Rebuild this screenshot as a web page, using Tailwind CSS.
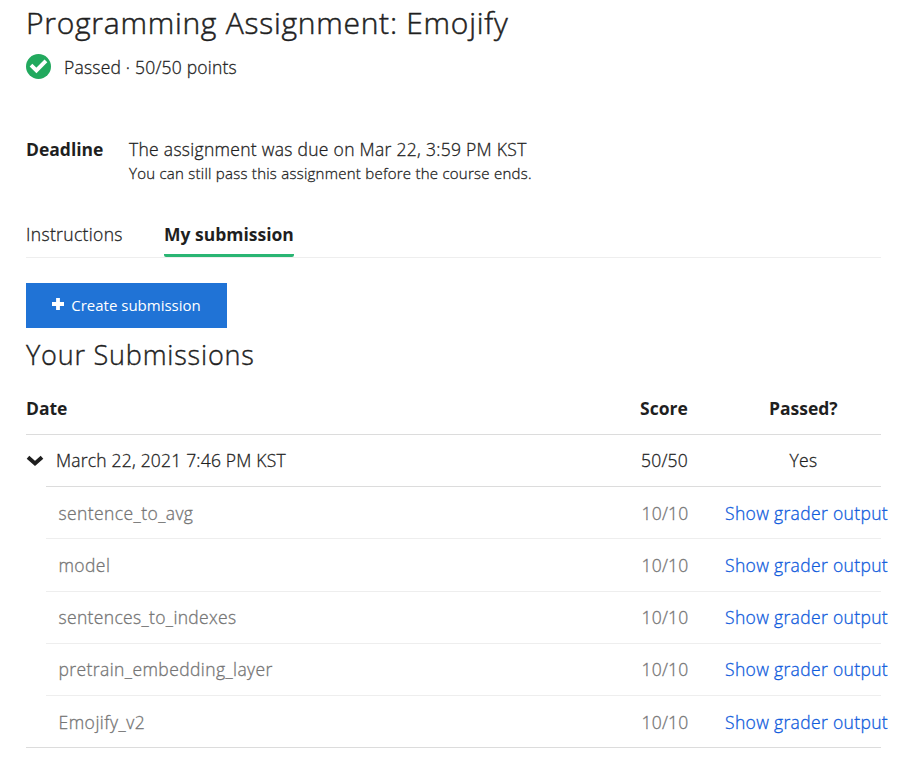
<!DOCTYPE html>
<html lang="en">
<head>
<meta charset="utf-8">
<title>Programming Assignment: Emojify</title>
<script src="https://cdn.jsdelivr.net/npm/@tailwindcss/browser@4"></script>
</head>
<body class="bg-white font-['Open_Sans',sans-serif] font-light [-webkit-text-stroke:0.3px] text-[#1f1f1f] text-[17.5px] leading-6 h-[763px] overflow-hidden">
<main class="pl-[26px] w-[881px]">
  <h1 class="pt-[3px] text-[30px] leading-10 font-light tracking-[0.74px] [-webkit-text-stroke:0.5px]">Programming Assignment: Emojify</h1>
  <div class="flex items-center mt-[11px] h-[25px]">
    <svg class="w-[25px] h-[25px]" viewBox="0 0 25 25"><circle cx="12.5" cy="12.5" r="12.5" fill="#22a95e"/><path d="M5 11.2l5.4 5.2 9.5-9.6" fill="none" stroke="#fff" stroke-width="3.9"/></svg>
    <span class="ml-[13px] pt-px tracking-[0.21px]">Passed · 50/50 points</span>
  </div>
  <section class="flex mt-[58px] h-[50px]">
    <div class="w-[103px] font-bold [-webkit-text-stroke:0px]">Deadline</div>
    <div><p class="tracking-[0.29px]">The assignment was due on Mar 22, 3:59 PM KST</p><p class="text-[15px] tracking-[0.25px]">You can still pass this assignment before the course ends.</p></div>
  </section>
  <nav class="flex mt-[35px] h-[36px] border-b border-[#eee]">
    <a class="w-[138px] tracking-[0.34px]">Instructions</a>
    <a class="font-bold [-webkit-text-stroke:0px] h-[35px] border-b-[3px] border-[#2ab573] rounded-b-xs">My submission</a>
  </nav>
  <button class="mt-[25px] flex items-center justify-center w-[201px] h-[45px] pb-px bg-[#2073d6] text-white text-[15px] font-normal [-webkit-text-stroke:0px]">
    <svg class="w-3 h-3 mr-[7px] -mt-[3px]" viewBox="0 0 12 12"><path d="M6 0v12M0 6h12" stroke="#fff" stroke-width="3.8"/></svg>Create submission
  </button>
  <h2 class="mt-[7px] text-[27px] leading-10 font-light tracking-[0.8px] [-webkit-text-stroke:0.4px]">Your Submissions</h2>
  <div class="mt-2">
    <div class="grid grid-cols-[614px_129px_112px] h-[52px] pb-[2px] items-center border-b border-[#dcdcdc] font-bold [-webkit-text-stroke:0px]"><span>Date</span><span>Score</span><span>Passed?</span></div>
    <div class="grid grid-cols-[30px_632px_193px] h-[51px] pb-px items-center">
      <svg class="w-[18px] h-[12px] mt-px" viewBox="0 0 18 12"><path d="M2 2.3L9 8.5l7-6.2" fill="none" stroke="#1f1f1f" stroke-width="3.9"/></svg>
      <div class="flex justify-between tracking-[0.2px]"><span>March 22, 2021 7:46 PM KST</span><span>50/50</span></div>
      <span class="pl-[101.5px] tracking-[0.3px]">Yes</span>
    </div>
    <ul class="pl-[20px] border-b border-[#dcdcdc] text-[#757575] tracking-[0.41px]">
      <li class="flex items-center h-[52px] border-t border-[#dcdcdc] pl-[12.5px] pt-px"><span class="w-[582px] shrink-0">sentence_to_avg</span><span class="w-[48px] shrink-0 flex justify-end tracking-[0.2px]">10/10</span><a class="ml-[36.5px] shrink-0 whitespace-nowrap text-[#0f5bdc] tracking-[0.34px]">Show grader output</a></li>
      <li class="flex items-center h-[53px] border-t border-[#eee] pl-[12.5px]"><span class="w-[582px] shrink-0">model</span><span class="w-[48px] shrink-0 flex justify-end tracking-[0.2px]">10/10</span><a class="ml-[36.5px] shrink-0 whitespace-nowrap text-[#0f5bdc] tracking-[0.34px]">Show grader output</a></li>
      <li class="flex items-center h-[52px] border-t border-[#eee] pl-[12.5px] pb-[2px]"><span class="w-[582px] shrink-0 tracking-[0.34px]">sentences_to_indexes</span><span class="w-[48px] shrink-0 flex justify-end tracking-[0.2px]">10/10</span><a class="ml-[36.5px] shrink-0 whitespace-nowrap text-[#0f5bdc] tracking-[0.34px]">Show grader output</a></li>
      <li class="flex items-center h-[52px] border-t border-[#eee] pl-[12.5px] pb-[2px]"><span class="w-[582px] shrink-0">pretrain_embedding_layer</span><span class="w-[48px] shrink-0 flex justify-end tracking-[0.2px]">10/10</span><a class="ml-[36.5px] shrink-0 whitespace-nowrap text-[#0f5bdc] tracking-[0.34px]">Show grader output</a></li>
      <li class="flex items-center h-[52px] border-t border-[#eee] pl-[12.5px] pt-px"><span class="w-[582px] shrink-0 tracking-[0.5px]">Emojify_v2</span><span class="w-[48px] shrink-0 flex justify-end tracking-[0.2px]">10/10</span><a class="ml-[36.5px] shrink-0 whitespace-nowrap text-[#0f5bdc] tracking-[0.34px]">Show grader output</a></li>
    </ul>
  </div>
</main>
</body>
</html>
